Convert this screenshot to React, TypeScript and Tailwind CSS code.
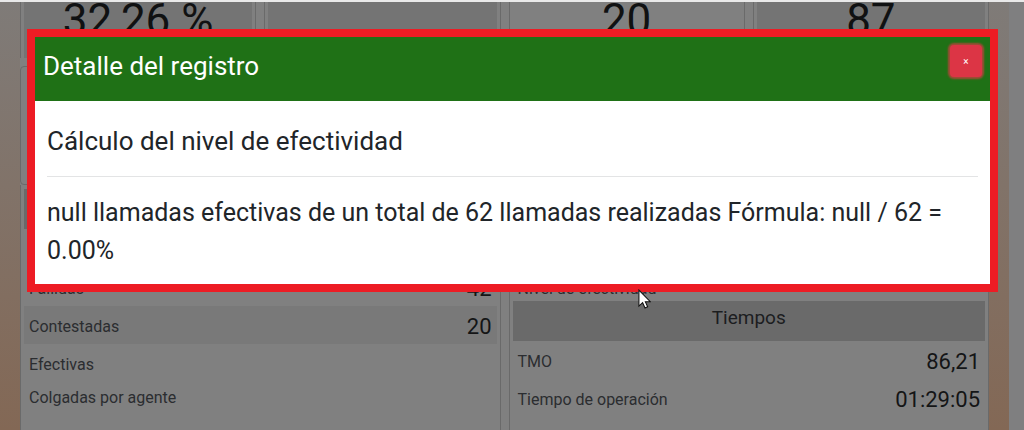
type RowProps = { label: string; value?: string; striped?: boolean; compact?: boolean };

function Row({ label, value, striped, compact }: RowProps) {
  return (
    <tr className={`${striped ? 'bg-[#797979]' : ''} ${compact ? 'h-7' : 'h-[38px]'}`}>
      <th scope="row" className="px-[5px] pt-1 text-left text-base leading-6 font-normal text-[#2b2d30]">{label}</th>
      <td className="px-[5px] pt-1 text-right text-[22px] leading-6 text-[#141516]">{value}</td>
    </tr>
  );
}

function Metric({ value, shaded }: { value: string; shaded?: boolean }) {
  return (
    <div className="flex-1 border-x border-[#6a6a6a] px-[3px]">
      <div className={`h-14 text-center text-[44px] leading-9 text-[#101112] ${shaded ? 'bg-[#747474]' : ''}`}>{value}</div>
    </div>
  );
}

function Pointer() {
  return (
    <svg className="absolute top-[289px] left-[638px] h-[20px] w-[13px]" viewBox="0 0 12 19" aria-hidden="true">
      <path d="M.7 1v15.2l3.5-3.2 2.3 5 2.5-1.1-2.2-4.8h4.7z" fill="#fff" stroke="#111" strokeWidth="1" />
    </svg>
  );
}

export default function App() {
  return (
    <div className="relative h-screen overflow-hidden bg-[#808080] font-[Roboto,sans-serif]">
      <div className="flex h-full border-t-2 border-[#e9e9e9]">
        <main className="flex min-w-0 flex-1 bg-linear-to-b from-[#7f7b78] to-[#836855] px-5">
          <div className="flex min-w-0 flex-1 gap-2 bg-[#808080]">
            <section className="flex-1">
              <div className="flex gap-2">
                <Metric value="32,26 %" shaded />
                <Metric value="" shaded />
              </div>
              <div className="mt-2 h-[119px] rounded border border-[#6a6a6a]" />
              <div className="border-x border-[#6a6a6a] px-[3px] pt-1 pb-40">
                <div className="h-10 bg-[#6a6a6a]" />
                <table className="mt-[39px] w-full">
                  <tbody>
                    <Row label="Fallidas" value="42" />
                    <Row label="Contestadas" value="20" striped />
                    <Row label="Efectivas" />
                    <Row label="Colgadas por agente" compact />
                  </tbody>
                </table>
              </div>
            </section>
            <section className="flex-1">
              <div className="flex gap-2">
                <Metric value="20" />
                <Metric value="87" shaded />
              </div>
              <div className="mt-2 h-[119px] rounded border border-[#6a6a6a]" />
              <div className="border-x border-[#6a6a6a] px-[3px] pt-[88px] pb-40">
                <table className="w-full">
                  <tbody>
                    <Row label="Nivel de efectividad" compact />
                  </tbody>
                </table>
                <h2 className="h-10 bg-[#6a6a6a] pt-[3px] text-center text-[19px] leading-7 text-[#1c1d1f]">Tiempos</h2>
                <table className="w-full">
                  <tbody>
                    <Row label="TMO" value="86,21" />
                    <Row label="Tiempo de operación" value="01:29:05" />
                  </tbody>
                </table>
              </div>
            </section>
          </div>
        </main>
        <div className="w-[15px] bg-[#7f7f80]" />
      </div>

      <div className="absolute inset-x-0 top-0 pt-[29px] pr-[26px] pl-[27px]">
        <div role="dialog" aria-labelledby="dialog-title" className="border-8 border-[#ed1c24] bg-white text-[#212529]">
          <header className="flex h-16 items-start justify-between bg-[#1f7116] px-2 pt-2">
            <h1 id="dialog-title" className="pt-[3px] text-[26px] leading-9 text-white">Detalle del registro</h1>
            <button type="button" aria-label="Cerrar" className="size-8 rounded bg-[#dc3545] text-[10px] text-white shadow-[0_0_2px_2px_#a34a36]">×</button>
          </header>
          <div className="px-3 pt-[21px] pb-[14px] text-[25px] leading-[38px]">
            <h2 className="border-b border-[#e3e4e5] pb-4 text-[26px] leading-[38px]">Cálculo del nivel de efectividad</h2>
            <p className="pt-[17px]">null llamadas efectivas de un total de 62 llamadas realizadas Fórmula: null / 62 = 0.00%</p>
          </div>
        </div>
      </div>
      <Pointer />
    </div>
  );
}
